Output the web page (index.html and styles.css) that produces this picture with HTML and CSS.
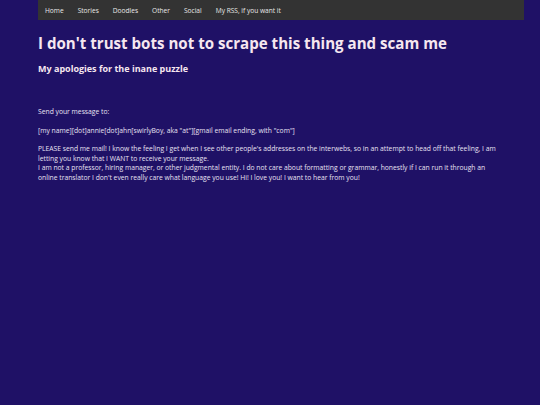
FILE: index.html
```html
<!DOCTYPE html>
<html>
<head>
<meta charset="utf-8">
<link rel="stylesheet" href="styles.css">
</head>
<body>
<div class="page">
  <nav class="nav">
    <a href="#">Home</a>
    <a href="#">Stories</a>
    <a href="#">Doodles</a>
    <a href="#">Other</a>
    <a href="#">Social</a>
    <a href="#">My RSS, if you want it</a>
  </nav>
  <div class="main">
    <h1 class="title">I don't trust bots not to scrape this thing and scam me</h1>
    <h2 class="subtitle">My apologies for the inane puzzle</h2>
    <div class="content">
      <p>Send your message to:</p>
      <p>[my name][dot]annie[dot]ahn[swirlyBoy, aka "at"][gmail email ending, with "com"]</p>
      <p>PLEASE send me mail! I know the feeling I get when I see other people's addresses on the interwebs, so in an attempt to head off that feeling, I am letting you know that I WANT to receive your message.<br>I am not a professor, hiring manager, or other judgmental entity. I do not care about formatting or grammar, honestly if I can run it through an online translator I don't even really care what language you use! Hi! I love you! I want to hear from you!</p>
    </div>
  </div>
</div>
</body>
</html>
```

FILE: styles.css
```css
html, body {
  margin: 0;
  padding: 0;
  background: #1f1166;
  font-family: "Open Sans", sans-serif;
}
.page {
  width: 486px;
  margin: 0 0 0 38px;
}
.nav {
  display: flex;
  background: #333333;
  height: 20px;
  align-items: center;
  padding-left: 7px;
}
.nav a {
  color: #e8e8e8;
  text-decoration: none;
  font-size: 6.6px;
  margin-right: 14px;
}
.main {
  padding-right: 20px;
}
.title {
  margin: 13px 0 0 0;
  font-size: 15.1px;
  font-weight: 700;
  color: #f6e7ef;
  line-height: 20px;
}
.subtitle {
  margin: 10px 0 0 0;
  font-size: 9px;
  font-weight: 700;
  color: #f6e7ef;
  line-height: 12px;
}
.content {
  margin-top: 32px;
  color: #e8e2f2;
  font-size: 6.75px;
  line-height: 9.6px;
}
.content p {
  margin: 0 0 9px 0;
}
```
